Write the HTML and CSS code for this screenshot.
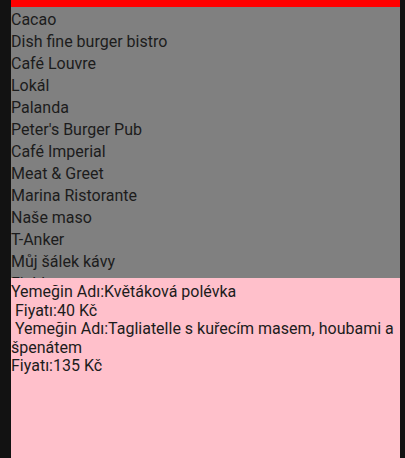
FILE: index.html
```html
<!DOCTYPE html>
<html>
<head>
<meta charset="utf-8">
<link rel="stylesheet" href="styles.css">
</head>
<body>
<div class="screen">
  <div class="topbar"></div>
  <ul class="list">
    <li>Cacao</li>
    <li>Dish fine burger bistro</li>
    <li>Café Louvre</li>
    <li>Lokál</li>
    <li>Palanda</li>
    <li>Peter's Burger Pub</li>
    <li>Café Imperial</li>
    <li>Meat &amp; Greet</li>
    <li>Marina Ristorante</li>
    <li>Naše maso</li>
    <li>T-Anker</li>
    <li>Můj šálek kávy</li>
    <li>Field</li>
  </ul>
  <div class="detail">Yemeğin Adı:Květáková polévka
 Fiyatı:40 Kč
 Yemeğin Adı:Tagliatelle s kuřecím masem, houbami a špenátem
Fiyatı:135 Kč</div>
</div>
</body>
</html>
```
FILE: styles.css
```css
html, body {
  margin: 0;
  padding: 0;
  background: #121212;
  height: 458px;
  overflow: hidden;
}
.screen {
  margin: 0 5px 0 11px;
  height: 458px;
  display: flex;
  flex-direction: column;
  font-family: Roboto, "Noto Sans", sans-serif;
  font-size: 16px;
  color: #1c1c1c;
}
.topbar {
  height: 7px;
  background: #ff0000;
  flex: none;
}
.list {
  list-style: none;
  margin: 0;
  padding: 2px 0 0 0;
  height: 269px;
  overflow: hidden;
  background: #808080;
  flex: none;
}
.list li {
  line-height: 22px;
  height: 22px;
  white-space: nowrap;
}
.detail {
  flex: 1;
  background: #ffc0cb;
  padding-top: 5px;
  line-height: 18.5px;
  white-space: pre-wrap;
}
```
